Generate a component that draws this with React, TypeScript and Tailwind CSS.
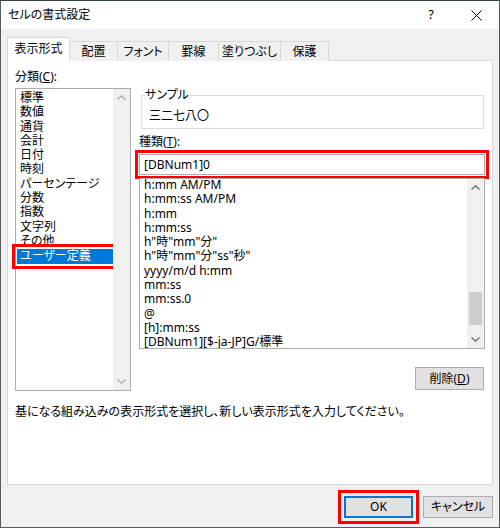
const font = "font-['Noto_Sans','Noto_Sans_CJK_JP',sans-serif] [font-feature-settings:'palt']";

const categories = [
  "標準",
  "数値",
  "通貨",
  "会計",
  "日付",
  "時刻",
  "パーセンテージ",
  "分数",
  "指数",
  "文字列",
  "その他",
  "ユーザー定義",
];

const formats = [
  "h:mm AM/PM",
  "h:mm:ss AM/PM",
  "h:mm",
  "h:mm:ss",
  'h"時"mm"分"',
  'h"時"mm"分"ss"秒"',
  "yyyy/m/d h:mm",
  "mm:ss",
  "mm:ss.0",
  "@",
  "[h]:mm:ss",
  "[DBNum1][$-ja-JP]G/標準",
];

const tabs = [
  { label: "配置", w: "w-[49px]" },
  { label: "フォント", w: "w-[52px]" },
  { label: "罫線", w: "w-[51px]" },
  { label: "塗りつぶし", w: "w-[63px]" },
  { label: "保護", w: "w-[49px]" },
];

function Chevron({ up, color }: { up?: boolean; color: string }) {
  return (
    <svg width="9" height="5" viewBox="0 0 9 5" fill="none">
      <path d={up ? "M0.5 4.5 L4.5 0.8 L8.5 4.5" : "M0.5 0.5 L4.5 4.2 L8.5 0.5"} stroke={color} strokeWidth="1.1" />
    </svg>
  );
}

export default function App() {
  return (
    <div className={`${font} flex h-[528px] w-[500px] flex-col border border-[#5a5a5a] border-t-[#2e4638] bg-[#f0f0f0] text-[12px] text-black`}>
      {/* title bar */}
      <div className="flex h-[28px] items-center bg-white pl-[7px] pr-[17px]">
        <span className="flex-1 leading-[14px]">セルの書式設定</span>
        <span className="mr-[37px] text-[13px]">?</span>
        <svg width="11" height="11" viewBox="0 0 11 11">
          <path d="M0.5 0.5 L10.5 10.5 M10.5 0.5 L0.5 10.5" stroke="#000" strokeWidth="1" />
        </svg>
      </div>

      <div className="flex flex-1 flex-col pl-[6px] pr-[6px] pt-[8px]">
        {/* tabs */}
        <div className="relative z-10 -mb-[1px] flex h-[24px] items-end">
          <div className="flex h-[24px] w-[63px] items-center justify-center border border-b-0 border-[#d9d9d9] bg-white pb-[1px]">
            表示形式
          </div>
          {tabs.map((t) => (
            <div
              key={t.label}
              className={`flex h-[20px] ${t.w} -ml-[1px] items-center justify-center border border-b-0 border-[#d9d9d9] bg-[#f0f0f0] first:ml-0`}
            >
              {t.label}
            </div>
          ))}
        </div>

        {/* panel */}
        <div className="flex h-[425px] flex-col border border-[#d9d9d9] bg-white px-[7px] pt-[9px]">
          <div className="flex gap-[8px]">
            {/* left column */}
            <div className="flex w-[116px] flex-col">
              <div className="h-[18px] leading-[14px]">
                分類(<span className="underline">C</span>):
              </div>
              <div className="flex h-[303px] border border-[#adadad] bg-white">
                <div className="flex-1 pl-[1px] pt-[2px]">
                  {categories.map((c) =>
                    c === "ユーザー定義" ? (
                      <div
                        key={c}
                        className="mt-[1px] h-[14.3px] bg-[#0078d7] pl-[3px] leading-[14.3px] text-white outline-[3px] outline-offset-[2px] outline-[#ff0000] outline-solid"
                      >
                        {c}
                      </div>
                    ) : (
                      <div key={c} className="h-[14.3px] pl-[3px] leading-[14.3px]">
                        {c}
                      </div>
                    )
                  )}
                </div>
                <div className="flex w-[17px] flex-col items-center justify-between bg-[#f0f0f0] py-[6px]">
                  <Chevron up color="#a6a6a6" />
                  <Chevron color="#a6a6a6" />
                </div>
              </div>
            </div>

            {/* right column */}
            <div className="flex flex-1 flex-col">
              <div className="relative ml-[2px] mr-[1px] mt-[25px] h-[34px] border border-[#dcdcdc] pl-[7px] pt-[13px]">
                <span className="absolute -top-[8px] left-[3px] bg-white pr-[1px] leading-[14px]">サンプル</span>
                <div className="leading-[14px]">三二七八〇</div>
              </div>
              <div className="mt-[6px] leading-[14px]">
                種類(<span className="underline">T</span>):
              </div>
              <div className="mt-[5px] flex h-[21px] items-center border border-[#adadad] bg-white pl-[4px] outline-[3px] outline-offset-[1px] outline-[#ff0000] outline-solid">
                [DBNum1]0
              </div>
              <div className="mt-[3px] flex h-[171px] border border-[#adadad] bg-white">
                <div className="flex-1 overflow-hidden pl-[4px]">
                  <div className="-mt-[1px]">
                    {formats.map((f) => (
                      <div key={f} className="h-[14.3px] whitespace-nowrap leading-[14.3px]">
                        {f}
                      </div>
                    ))}
                  </div>
                </div>
                <div className="flex w-[17px] flex-col items-center bg-[#f0f0f0] pb-[6px] pt-[6px]">
                  <Chevron up color="#606060" />
                  <div className="mt-[102px] h-[33px] w-[13px] bg-[#cdcdcd]" />
                  <div className="mt-auto">
                    <Chevron color="#606060" />
                  </div>
                </div>
              </div>
              <div className="mt-[18px] flex justify-end pr-[1px]">
                <button className="flex h-[23px] w-[69px] items-center justify-center border border-[#adadad] bg-[#e1e1e1]">
                  削除(<span className="underline">D</span>)
                </button>
              </div>
            </div>
          </div>
          <div className="mt-[14px] leading-[14px]">
            基になる組み込みの表示形式を選択し、新しい表示形式を入力してください。
          </div>
        </div>

        {/* buttons */}
        <div className="mt-[11px] flex justify-end gap-[10px] pr-[0px]">
          <button className="flex h-[22px] w-[69px] items-center justify-center border-2 border-[#0078d7] bg-[#e1e1e1] outline-[3px] outline-offset-[3px] outline-[#ff0000] outline-solid">
            OK
          </button>
          <button className="flex h-[22px] w-[70px] items-center justify-center border border-[#adadad] bg-[#e1e1e1]">
            キャンセル
          </button>
        </div>
      </div>
    </div>
  );
}
